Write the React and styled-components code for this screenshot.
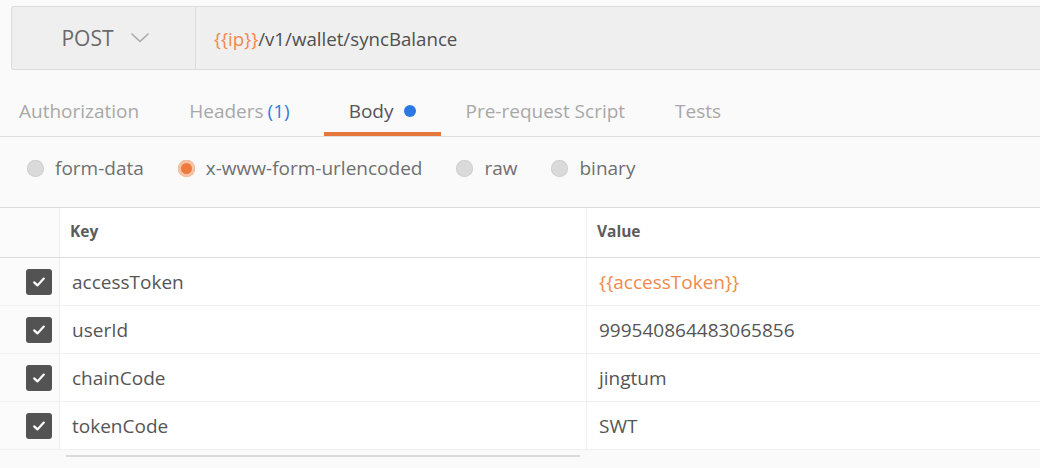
import React from "react";
import styled, { createGlobalStyle } from "styled-components";

const Global = createGlobalStyle`
  html, body { margin: 0; padding: 0; background: #ffffff; }
  body { font-family: "Open Sans", "Liberation Sans", sans-serif; }
  * { box-sizing: border-box; }
`;

const Page = styled.div`
  width: 1040px;
  height: 468px;
  background: #fafafa;
  display: flex;
  flex-direction: column;
  padding-top: 6px;
`;

const UrlBar = styled.div`
  margin-left: 11px;
  height: 64px;
  display: flex;
  background: #efefef;
  border: 1px solid #dcdcdc;
  border-right: none;
  border-radius: 3px 0 0 3px;
`;

const Method = styled.div`
  width: 184px;
  display: flex;
  align-items: center;
  justify-content: center;
  gap: 16px;
  border-right: 1px solid #dcdcdc;
  font-size: 21px;
  color: #6a6a6a;
  padding-left: 4px;
`;

const UrlText = styled.div`
  flex: 1;
  display: flex;
  align-items: center;
  padding-left: 18px;
  font-size: 18.7px;
  color: #505050;
`;

const Var = styled.span`
  color: #f0884a;
`;

const Tabs = styled.div`
  height: 67px;
  display: flex;
  align-items: stretch;
  border-bottom: 1px solid #dedede;
`;

const Tab = styled.div`
  display: flex;
  align-items: center;
  gap: 8px;
  padding: 20px 25px 0;
  font-size: 19px;
  color: ${(p) => (p.$active ? "#555555" : "#a8a8a8")};
  border-bottom: 4px solid ${(p) => (p.$active ? "#e5773d" : "transparent")};
  &:first-child { padding-left: 19px; }
`;

const Count = styled.span`
  color: #2f7ed8;
  margin-left: 4px;
  margin-right: 9px;
`;

const Dot = styled.span`
  width: 12px;
  height: 12px;
  border-radius: 50%;
  background: #2b78e4;
  margin-left: 2px;
`;

const Radios = styled.div`
  height: 70px;
  display: flex;
  align-items: center;
  padding: 0 0 8px 27px;
  gap: 34px;
`;

const RadioItem = styled.label`
  display: flex;
  align-items: center;
  gap: 11px;
  font-size: 19px;
  color: #707070;
`;

const RadioDot = styled.span`
  width: 17px;
  height: 17px;
  border-radius: 50%;
  background: ${(p) => (p.$on ? "#ee7a3e" : "#dadada")};
  box-shadow: ${(p) => (p.$on ? "inset 0 0 0 3px #f3c3a6" : "inset 0 0 0 1px #d0d0d0")};
`;

const Table = styled.div`
  display: flex;
  flex-direction: column;
  border-top: 1px solid #dcdcdc;
  background: #ffffff;
`;

const Row = styled.div`
  display: grid;
  grid-template-columns: 60px 527px 1fr;
  height: ${(p) => (p.$head ? "50px" : "48px")};
  border-bottom: 1px solid ${(p) => (p.$head ? "#dcdcdc" : "#f0f0f0")};
`;

const CheckCell = styled.div`
  display: flex;
  align-items: center;
  padding-left: 26px;
  background: #fbfbfb;
  border-right: 1px solid #eeeeee;
`;

const Cell = styled.div`
  display: flex;
  align-items: center;
  padding-left: ${(p) => (p.$head ? "10px" : "12px")};
  padding-bottom: ${(p) => (p.$head ? "3px" : "0")};
  font-size: ${(p) => (p.$head ? "15.5px" : "19px")};
  font-weight: ${(p) => (p.$head ? 700 : 400)};
  color: ${(p) => (p.$orange ? "#ef8a4c" : p.$head ? "#5c5c5c" : "#555555")};
  border-right: ${(p) => (p.$divide ? "1px solid #eeeeee" : "none")};
`;

const Box = styled.span`
  width: 26px;
  height: 26px;
  border-radius: 3px;
  background: #535353;
  display: flex;
  align-items: center;
  justify-content: center;
`;

const Scroll = styled.div`
  height: 7px;
  background: #fafafa;
  display: flex;
  align-items: flex-end;
`;

const Thumb = styled.div`
  margin-left: 66px;
  width: 514px;
  height: 2px;
  background: #dadada;
`;

const Chevron = () => (
  <svg width="20" height="12" viewBox="0 0 20 12" fill="none">
    <path d="M2 2 L10 9.5 L18 2" stroke="#a9a9a9" strokeWidth="1.6" strokeLinecap="round" strokeLinejoin="round" />
  </svg>
);

const Check = () => (
  <svg width="16" height="16" viewBox="0 0 16 16" fill="none">
    <path d="M3.2 8.4 L6.4 11.4 L12.8 4.6" stroke="#ffffff" strokeWidth="2.2" strokeLinecap="round" strokeLinejoin="round" />
  </svg>
);

const rows = [
  { k: "accessToken", v: "{{accessToken}}", orange: true },
  { k: "userId", v: "999540864483065856" },
  { k: "chainCode", v: "jingtum" },
  { k: "tokenCode", v: "SWT" },
];

export default function App() {
  return (
    <>
      <Global />
      <Page>
        <UrlBar>
          <Method>
            POST <Chevron />
          </Method>
          <UrlText>
            <Var>{"{{ip}}"}</Var>/v1/wallet/syncBalance
          </UrlText>
        </UrlBar>
        <Tabs>
          <Tab>Authorization</Tab>
          <Tab>
            <span>
              Headers<Count>(1)</Count>
            </span>
          </Tab>
          <Tab $active>
            Body <Dot />
          </Tab>
          <Tab>Pre-request Script</Tab>
          <Tab>Tests</Tab>
        </Tabs>
        <Radios>
          <RadioItem>
            <RadioDot /> form-data
          </RadioItem>
          <RadioItem>
            <RadioDot $on /> x-www-form-urlencoded
          </RadioItem>
          <RadioItem>
            <RadioDot /> raw
          </RadioItem>
          <RadioItem>
            <RadioDot /> binary
          </RadioItem>
        </Radios>
        <Table>
          <Row $head>
            <CheckCell />
            <Cell $head $divide>Key</Cell>
            <Cell $head>Value</Cell>
          </Row>
          {rows.map((r) => (
            <Row key={r.k}>
              <CheckCell>
                <Box>
                  <Check />
                </Box>
              </CheckCell>
              <Cell $divide>{r.k}</Cell>
              <Cell $orange={r.orange}>{r.v}</Cell>
            </Row>
          ))}
        </Table>
        <Scroll>
          <Thumb />
        </Scroll>
      </Page>
    </>
  );
}
